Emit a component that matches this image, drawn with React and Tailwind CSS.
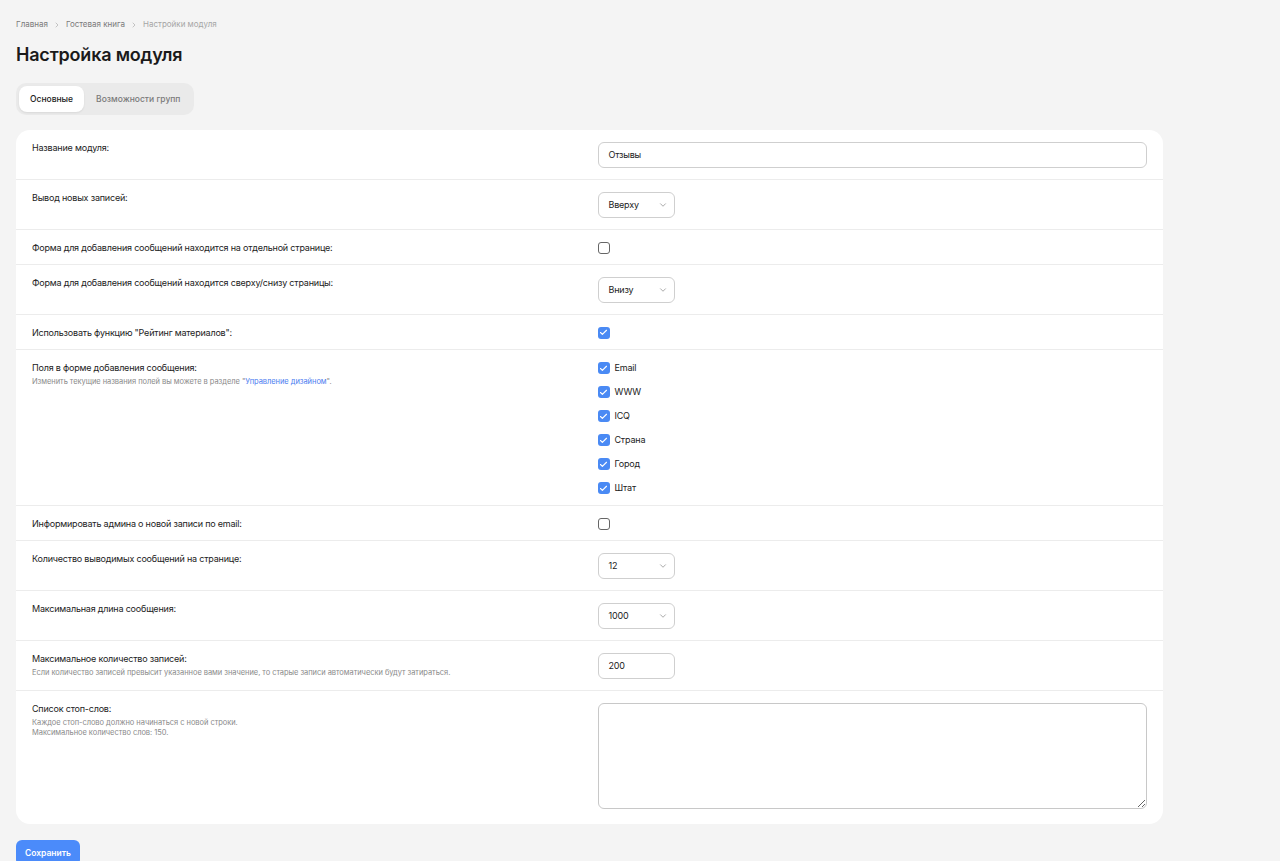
import { ChevronRight, ChevronDown, Check } from 'lucide-react'

const fields = ['Email', 'WWW', 'ICQ', 'Страна', 'Город', 'Штат']

function Row({ label, hint, children, last }) {
    return (
        <div className={`grid grid-cols-2 gap-4 px-4 pt-3 ${last ? 'pb-[15px]' : 'pb-[11px] border-b border-[#ececec]'}`}>
            <div>
                <div className="text-[9px] leading-[11px] tracking-[-0.2px] text-[#222]">{label}</div>
                {hint && <div className="text-[7.5px] leading-[10px] tracking-[-0.05px] text-[#8a8a8a] mt-[4px]">{hint}</div>}
            </div>
            <div>{children}</div>
        </div>
    )
}

function Select({ value }) {
    return (
        <div className="w-[77px] h-[26px] border border-[#cfcfcf] rounded-[6px] flex items-center justify-between pl-[10px] pr-[6px] text-[9px] tracking-[-0.2px] text-[#222]">
            <span>{value}</span>
            <ChevronDown size={10} strokeWidth={1.5} className="text-[#777]" />
        </div>
    )
}

function Checkbox({ checked }) {
    return checked ? (
        <span className="w-[12px] h-[12px] rounded-[3px] bg-[#4a8af4] flex items-center justify-center shrink-0">
            <Check size={9} strokeWidth={3} className="text-white" />
        </span>
    ) : (
        <span className="w-[12px] h-[12px] rounded-[3px] border-[1.5px] border-[#666] bg-white shrink-0" />
    )
}

function CheckRow({ label, checked }) {
    return (
        <Row label={label}>
            <div className="h-[11px] flex items-center">
                <Checkbox checked={checked} />
            </div>
        </Row>
    )
}

export default function App() {
    return (
        <div className="min-h-screen bg-[#f4f4f4] px-4 pt-[19px] pb-6" style={{ fontFamily: 'Inter, "Noto Sans", sans-serif' }}>
            {/* Breadcrumbs */}
            <div className="flex items-center gap-[5px] text-[8px] leading-[11px]">
                <span className="text-[#7a7a7a]">Главная</span>
                <ChevronRight size={8} className="text-[#aaa]" />
                <span className="text-[#7a7a7a]">Гостевая книга</span>
                <ChevronRight size={8} className="text-[#aaa]" />
                <span className="text-[#a5a5a5]">Настройки модуля</span>
            </div>

            <h1 className="mt-[13px] text-[18px] leading-[24px] font-semibold text-[#1a1a1a] tracking-[-0.2px]">Настройка модуля</h1>

            {/* Tabs */}
            <div className="mt-[16px] inline-flex p-[3px] bg-[#eaeaea] rounded-[10px] gap-[1px]">
                <div className="px-[11px] h-[26px] flex items-center rounded-[8px] bg-white shadow-[0_1px_2px_rgba(0,0,0,0.08)] text-[8.5px] font-medium text-[#222]">Основные</div>
                <div className="px-[11px] h-[26px] flex items-center text-[8.5px] font-medium text-[#7a7a7a]">Возможности групп</div>
            </div>

            {/* Card */}
            <div className="mt-[15px] w-[1147px] bg-white rounded-[14px]">
                <Row label="Название модуля:">
                    <div className="h-[26px] border border-[#cfcfcf] rounded-[6px] flex items-center px-[10px] text-[9px] tracking-[-0.2px] text-[#222]">Отзывы</div>
                </Row>
                <Row label="Вывод новых записей:">
                    <Select value="Вверху" />
                </Row>
                <CheckRow label="Форма для добавления сообщений находится на отдельной странице:" />
                <Row label="Форма для добавления сообщений находится сверху/снизу страницы:">
                    <Select value="Внизу" />
                </Row>
                <CheckRow label={'Использовать функцию "Рейтинг материалов":'} checked />
                <Row
                    label="Поля в форме добавления сообщения:"
                    hint={<>Изменить текущие названия полей вы можете в разделе "<span className="text-[#4a7cf0]">Управление дизайном</span>".</>}
                >
                    <div className="flex flex-col gap-[12px]">
                        {fields.map(f => (
                            <div key={f} className="h-[12px] flex items-center gap-[5px]">
                                <Checkbox checked />
                                <span className="text-[9px] tracking-[-0.2px] text-[#222]">{f}</span>
                            </div>
                        ))}
                    </div>
                </Row>
                <CheckRow label="Информировать админа о новой записи по email:" />
                <Row label="Количество выводимых сообщений на странице:">
                    <Select value="12" />
                </Row>
                <Row label="Максимальная длина сообщения:">
                    <Select value="1000" />
                </Row>
                <Row
                    label="Максимальное количество записей:"
                    hint="Если количество записей превысит указанное вами значение, то старые записи автоматически будут затираться."
                >
                    <div className="w-[77px] h-[26px] border border-[#cfcfcf] rounded-[6px] flex items-center px-[10px] text-[9px] tracking-[-0.2px] text-[#222]">200</div>
                </Row>
                <Row
                    last
                    label="Список стоп-слов:"
                    hint={<>Каждое стоп-слово должно начинаться с новой строки.<br />Максимальное количество слов: 150.</>}
                >
                    <textarea className="block w-full h-[106px] border border-[#c8c8c8] rounded-[6px] outline-none" />
                </Row>
            </div>

            <button className="mt-[16px] h-[26px] px-[9px] rounded-[6px] bg-[#4b8bfa] text-white text-[8.5px] font-semibold">Сохранить</button>
        </div>
    )
}
